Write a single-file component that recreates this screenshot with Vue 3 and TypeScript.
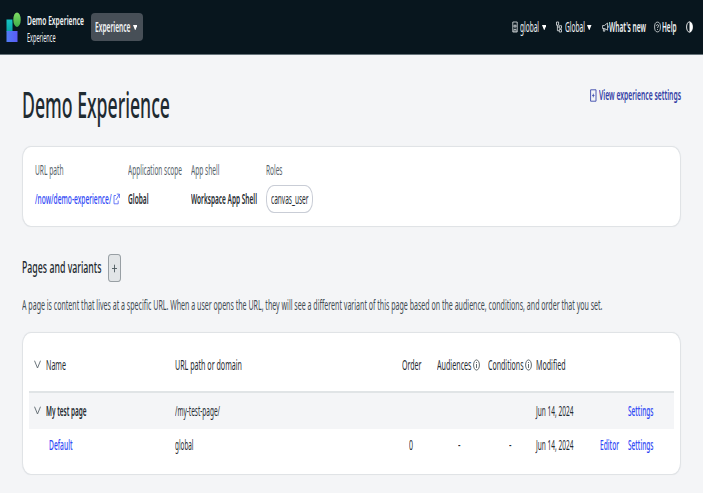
<script setup lang="ts">
import type { Directive } from 'vue'

// Condenses a text run horizontally so that it takes exactly the given width.
const vFit: Directive<HTMLElement, number> = {
  mounted(el, binding) {
    const natural = el.getBoundingClientRect().width
    el.style.transform = `scaleX(${binding.value / natural})`
    el.style.marginRight = `${binding.value - natural}px`
  },
}

interface Row {
  name: string
  nameWidth: number
  path: string
  pathWidth: number
  order: string
  audiences: string
  conditions: string
  modified: string
  parent: boolean
}

const rows: Row[] = [
  { name: 'My test page', nameWidth: 40.5, path: '/my-test-page/', pathWidth: 45, order: '', audiences: '', conditions: '', modified: 'Jun 14, 2024', parent: true },
  { name: 'Default', nameWidth: 23.5, path: 'global', pathWidth: 18.5, order: '0', audiences: '-', conditions: '-', modified: 'Jun 14, 2024', parent: false },
]
</script>

<template>
  <div class="page">
    <header class="topbar">
      <svg class="logo" viewBox="0 0 16 31" preserveAspectRatio="none">
        <defs>
          <linearGradient id="teal" x1="0" y1="0" x2="0" y2="1"><stop offset="0" stop-color="#16c4c4" /><stop offset="1" stop-color="#0aa5a8" /></linearGradient>
          <linearGradient id="blue" x1="0" y1="0" x2="1" y2="0"><stop offset="0" stop-color="#4f7df5" /><stop offset="1" stop-color="#5b5bf5" /></linearGradient>
          <linearGradient id="green" x1="0" y1="0" x2="0" y2="1"><stop offset="0" stop-color="#7fdc62" /><stop offset="1" stop-color="#3fae49" /></linearGradient>
        </defs>
        <rect x="0.5" y="7.5" width="6" height="12" fill="url(#teal)" />
        <rect x="0.5" y="19" width="11" height="11" fill="url(#blue)" />
        <ellipse cx="11" cy="8" rx="4.2" ry="7.8" fill="#08161e" />
        <ellipse cx="11" cy="7.7" rx="3.7" ry="7.2" fill="url(#green)" />
      </svg>
      <div class="brand">
        <span v-fit="57" class="t brand-name">Demo Experience</span>
        <span v-fit="28.5" class="t brand-sub">Experience</span>
      </div>
      <button class="switcher">
        <span v-fit="35.5" class="t switch-text">Experience</span>
        <svg class="caret" viewBox="0 0 5 6" preserveAspectRatio="none"><path d="M0 0H5L2.5 6Z" fill="#fff" /></svg>
      </button>
      <nav class="nav">
        <div class="nav-item scope">
          <svg class="ic-doc" viewBox="0 0 6 12"><path d="M.8 1H5.2V11H.8ZM2 4.2H4V6H2ZM2 11V8.3H4V11" fill="none" stroke="#e4e8ea" stroke-width=".8" /></svg>
          <span v-fit="19" class="t">global</span>
          <svg class="caret" viewBox="0 0 5 6" preserveAspectRatio="none"><path d="M0 0H5L2.5 6Z" fill="#fff" /></svg>
        </div>
        <div class="nav-item update">
          <svg class="ic-doc" viewBox="0 0 6 12"><path d="M.5 1H2.6V4.2H.5ZM1.4 4.2V9.7H3.2M1.4 6H3.2M3.3 4.7H5.5V7.3H3.3ZM3.3 8.5H5.5V11H3.3Z" fill="none" stroke="#e4e8ea" stroke-width=".8" /></svg>
          <span v-fit="20" class="t">Global</span>
          <svg class="caret" viewBox="0 0 5 6" preserveAspectRatio="none"><path d="M0 0H5L2.5 6Z" fill="#fff" /></svg>
        </div>
        <div class="nav-item news">
          <svg class="ic-horn" viewBox="0 0 7 12"><path d="M.6 4.5H2.4L5.6 2V9.2L2.4 7.5H.6ZM1.4 7.5V10.2H2.8V7.7M6.2 4.7V6.7" fill="none" stroke="#e4e8ea" stroke-width=".8" /></svg>
          <span v-fit="37" class="t strong">What's new</span>
        </div>
        <div class="nav-item help">
          <svg class="ic-help" viewBox="0 0 7 12"><ellipse cx="3.5" cy="6" rx="2.9" ry="4.9" fill="none" stroke="#e4e8ea" stroke-width=".8" /><path d="M2.5 4.8C2.5 3.2 4.6 3.2 4.6 4.8C4.6 5.8 3.5 5.8 3.5 7M3.5 8V8.9" fill="none" stroke="#e4e8ea" stroke-width=".8" /></svg>
          <span v-fit="14.5" class="t strong">Help</span>
        </div>
        <svg class="ic-theme" viewBox="0 0 7 12"><ellipse cx="3.5" cy="6" rx="2.9" ry="5.2" fill="none" stroke="#fff" stroke-width=".9" /><path d="M3.5 .8A2.9 5.2 0 0 1 3.5 11.2Z" fill="#fff" /></svg>
      </nav>
    </header>

    <main class="content">
      <div class="title-row">
        <h1 v-fit="148" class="t title">Demo Experience</h1>
        <a class="settings-link">
          <svg class="ic-plusdoc" viewBox="0 0 7 13"><path d="M.6 .8H6V12.2H.6Z" fill="none" stroke="#3a47ab" stroke-width=".9" /><path d="M3.3 4.7V8.3M2.1 6.5H4.5" fill="none" stroke="#3a47ab" stroke-width=".8" /></svg>
          <span v-fit="82" class="t">View experience settings</span>
        </a>
      </div>

      <section class="card summary">
        <div class="field">
          <span v-fit="28.5" class="t label">URL path</span>
          <div class="value">
            <span v-fit="76.5" class="t link">/now/demo-experience/</span>
            <svg class="ic-ext" viewBox="0 0 7 12"><path d="M3 2.5H1V10.8H5.2V7.5M3.8 1.1H6.4V5M6.4 1.1L2.9 7" fill="none" stroke="#4a5cf5" stroke-width=".8" /></svg>
          </div>
        </div>
        <div class="field">
          <span v-fit="54" class="t label">Application scope</span>
          <div class="value"><span v-fit="20.5" class="t strong">Global</span></div>
        </div>
        <div class="field">
          <span v-fit="28.5" class="t label">App shell</span>
          <div class="value"><span v-fit="66" class="t strong">Workspace App Shell</span></div>
        </div>
        <div class="field">
          <span v-fit="16.5" class="t label">Roles</span>
          <div class="value"><span class="chip"><span v-fit="37.5" class="t">canvas_user</span></span></div>
        </div>
      </section>

      <div class="section-head">
        <h2 v-fit="79.5" class="t heading">Pages and variants</h2>
        <button class="add">
          <svg class="ic-plus" viewBox="0 0 5 9"><path d="M2.5 .7V8.3M0 4.5H5" stroke="#4c585e" stroke-width=".9" /></svg>
        </button>
      </div>
      <p v-fit="580.5" class="t description">A page is content that lives at a specific URL. When a user opens the URL, they will see a different variant of this page based on the audience, conditions, and order that you set.</p>

      <section class="card table">
        <div class="row head">
          <svg class="chev" viewBox="0 0 7 9"><path d="M.5 .7L3.5 8L6.5 .7" fill="none" stroke="#5c686e" stroke-width=".9" /></svg>
          <span><span v-fit="20" class="t">Name</span></span>
          <span><span v-fit="67" class="t">URL path or domain</span></span>
          <span><span v-fit="19.5" class="t">Order</span></span>
          <span class="with-info">
            <span v-fit="34.5" class="t">Audiences</span>
            <svg class="ic-info" viewBox="0 0 7 12"><ellipse cx="3.5" cy="6" rx="2.9" ry="5.1" fill="none" stroke="#3c474d" stroke-width=".8" /><path d="M3.5 5V9M3.5 3V4" stroke="#3c474d" stroke-width=".8" /></svg>
          </span>
          <span class="with-info">
            <span v-fit="35.5" class="t">Conditions</span>
            <svg class="ic-info" viewBox="0 0 7 12"><ellipse cx="3.5" cy="6" rx="2.9" ry="5.1" fill="none" stroke="#3c474d" stroke-width=".8" /><path d="M3.5 5V9M3.5 3V4" stroke="#3c474d" stroke-width=".8" /></svg>
          </span>
          <span><span v-fit="29.5" class="t">Modified</span></span>
        </div>
        <div v-for="row in rows" :key="row.name" class="row" :class="row.parent ? 'parent' : 'child'">
          <svg v-if="row.parent" class="chev" viewBox="0 0 7 9"><path d="M.5 .7L3.5 8L6.5 .7" fill="none" stroke="#5c686e" stroke-width=".9" /></svg>
          <span v-else></span>
          <span class="name"><span v-fit="row.nameWidth" class="t">{{ row.name }}</span></span>
          <span><span v-fit="row.pathWidth" class="t">{{ row.path }}</span></span>
          <span class="num"><span v-if="row.order" v-fit="4" class="t">{{ row.order }}</span></span>
          <span class="center"><span v-if="row.audiences" v-fit="2.5" class="t">{{ row.audiences }}</span></span>
          <span class="center"><span v-if="row.conditions" v-fit="2.5" class="t">{{ row.conditions }}</span></span>
          <span><span v-fit="37.5" class="t">{{ row.modified }}</span></span>
          <span class="link"><span v-if="!row.parent" v-fit="19" class="t">Editor</span></span>
          <span class="link"><span v-fit="25.5" class="t">Settings</span></span>
        </div>
      </section>
    </main>
  </div>
</template>

<style>
body {
  margin: 0;
  background: #f4f5f7;
}
</style>

<style scoped>
.page {
  box-sizing: border-box;
  width: 703px;
  height: 493px;
  overflow: hidden;
  background: #f4f5f7;
  color: #1f2b31;
  font-family: "Noto Sans", sans-serif;
  font-size: 14.2px;
  line-height: 18px;
}
svg {
  display: block;
  flex: none;
}
.t {
  display: block;
  flex: none;
  width: max-content;
  margin: 0;
  white-space: nowrap;
  transform-origin: 0 50%;
}
button {
  border: 0;
  padding: 0;
  font: inherit;
  color: inherit;
}
.topbar {
  display: flex;
  align-items: center;
  box-sizing: border-box;
  height: 55px;
  padding: 0 10px 1px 5.5px;
  background: #08161e;
  border-bottom: 1px solid #66737a;
  color: #f2f4f5;
}
.logo {
  width: 16px;
  height: 31px;
  margin-top: 2px;
}
.brand {
  display: flex;
  flex-direction: column;
  align-items: flex-start;
  width: 63.5px;
  padding-left: 5.5px;
  margin-top: 4px;
}
.brand-name {
  font-size: 13.3px;
  line-height: 17px;
  font-weight: 600;
}
.brand-sub {
  font-size: 12px;
  line-height: 17px;
}
.switcher {
  display: flex;
  align-items: center;
  gap: 2px;
  box-sizing: border-box;
  width: 52.5px;
  height: 28px;
  margin-top: 1px;
  padding-left: 4.5px;
  border-radius: 4px;
  background: #474f57;
}
.switch-text {
  font-size: 13.5px;
  font-weight: 600;
}
.caret {
  width: 4.5px;
  height: 5.5px;
  margin-top: 1px;
}
.nav {
  display: flex;
  align-items: center;
  margin: 1px 0 0 auto;
  font-size: 14px;
}
.nav-item {
  display: flex;
  align-items: center;
}
.scope,
.update {
  gap: 2.5px;
  margin-right: 10px;
}
.scope .caret,
.update .caret {
  margin-left: 0;
}
.news {
  margin-right: 8.5px;
}
.help {
  gap: .5px;
  margin-right: 10px;
}
.ic-doc {
  width: 6px;
  height: 12px;
}
.ic-horn,
.ic-help,
.ic-theme,
.ic-ext,
.ic-info {
  width: 7px;
  height: 12px;
}
.strong {
  font-weight: 600;
}
.content {
  padding: 30px 22.5px 0 21.5px;
}
.title-row {
  display: flex;
  justify-content: space-between;
  height: 61px;
}
.title {
  font-size: 35.5px;
  line-height: 38px;
  font-weight: 550;
}
.settings-link {
  display: flex;
  align-items: center;
  gap: 1.5px;
  height: 20px;
  color: #3340a5;
  font-size: 13.5px;
  font-weight: 600;
}
.ic-plusdoc {
  width: 7px;
  height: 13px;
}
.card {
  box-sizing: border-box;
  background: #fff;
  border: 1.5px solid #e0e3e6;
  border-radius: 9px / 12px;
  box-shadow: 0 0 1px #e3e6e9;
}
.summary {
  display: grid;
  grid-template-columns: 93px 63px 75px 60px;
  height: 81px;
  padding: 14px 0 0 12.5px;
}
.label {
  color: #56626a;
  font-size: 14px;
}
.value {
  display: flex;
  align-items: center;
  gap: 1.5px;
  height: 30px;
  margin-top: 5px;
  font-weight: 500;
}
.link {
  color: #2f48f5;
}
.chip {
  display: flex;
  align-items: center;
  box-sizing: border-box;
  width: 47px;
  height: 28px;
  padding-left: 4px;
  border: 1px solid #c9cdd6;
  border-radius: 8px / 12px;
  font-weight: 400;
}
.section-head {
  display: flex;
  align-items: center;
  gap: 6.5px;
  height: 28px;
  margin-top: 27px;
}
.heading {
  padding-bottom: 2px;
  font-size: 17px;
  font-weight: 550;
  line-height: 22px;
}
.add {
  display: flex;
  align-items: center;
  justify-content: center;
  box-sizing: border-box;
  width: 13.5px;
  height: 28px;
  border: 1px solid #989fa4;
  border-radius: 3px / 4px;
  background: #e2e5e7;
}
.ic-plus {
  width: 5px;
  height: 9px;
}
.description {
  margin-top: 13px;
  color: #3f4b52;
  font-size: 14.6px;
  line-height: 18px;
}
.table {
  height: 143px;
  margin-top: 18.5px;
  padding: 0 6px 0 6.5px;
}
.row {
  display: grid;
  grid-template-columns: 12px 129px 227px 35px 51px 48px 64px 28px 28px;
  align-items: center;
  box-sizing: border-box;
  padding-left: 5px;
}
.head {
  height: 60px;
  padding-top: 6px;
  border-bottom: 2px solid #e0e4e6;
}
.parent {
  height: 36px;
  background: #f4f5f7;
}
.parent .name {
  font-weight: 600;
}
.child {
  height: 33px;
}
.child .name {
  padding-left: 3px;
  color: #2f48f5;
  font-weight: 500;
}
.child .num {
  padding-left: 7px;
}
.child .center {
  padding-left: 20.5px;
}
.row .link {
  font-weight: 500;
}
.with-info {
  display: flex;
  align-items: center;
  gap: 1.5px;
}
.chev {
  width: 7px;
  height: 9px;
}
</style>
